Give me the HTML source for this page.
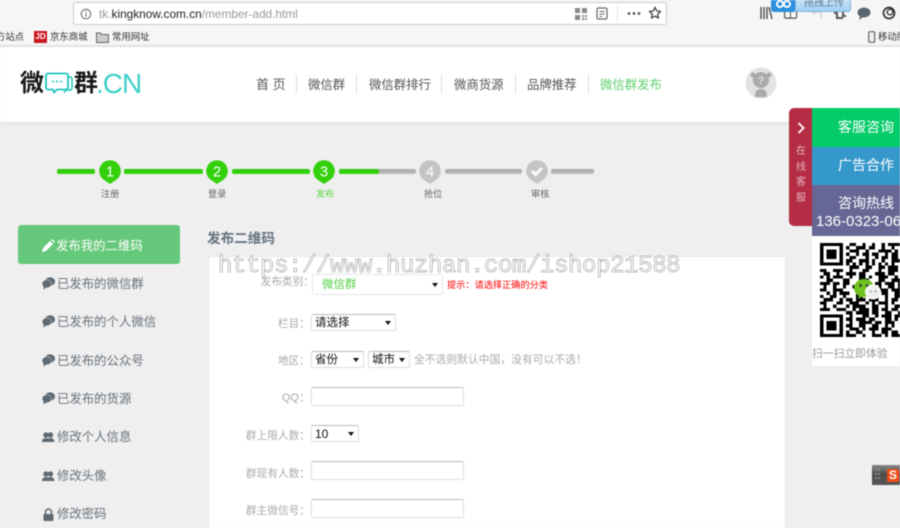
<!DOCTYPE html>
<html lang="zh"><head><meta charset="utf-8"><title>发布二维码</title>
<style>
html,body{margin:0;padding:0;width:900px;height:528px;overflow:hidden;background:#efefef}
body{position:relative;font-family:"Liberation Sans","Noto Sans CJK SC",sans-serif;color:#666}
#w{position:absolute;left:0;top:0;width:900px;height:528px;overflow:hidden;filter:blur(.4px)}
.a,.t{position:absolute}
.t{white-space:nowrap;line-height:16px;transform:translateY(-8px)}
.nav{font-size:12.4px;color:#555;margin-top:1px}
.sep{position:absolute;top:74px;width:1px;height:20px;background:#ddd}
.seg{position:absolute;top:169px;height:5px;border-radius:2px;background:linear-gradient(#2fc60a,#35d80d)}
.g{background:linear-gradient(#aaa,#bbb)}
.pin{position:absolute;top:160px}
.st{position:absolute;font-size:9.2px;color:#666;white-space:nowrap;line-height:12px;top:188px}
.m{font-size:12.4px;color:#68727c;left:57px;margin-top:1px}
.lb{font-size:10.7px;color:#aaa;text-align:right;width:100px;left:210px;margin-top:1px}
.box{position:absolute;background:#fff;border:1px solid #ddd;border-top-color:#bbb;box-sizing:border-box;border-radius:2px}
.sel{font-size:11.5px;color:#111;line-height:17px;padding-left:3px}
.sel i{position:absolute;right:4px;top:6px;width:0;height:0;border:3px solid transparent;border-top:4px solid #111;border-bottom:0}
.side{left:838px;color:#fff;font-size:14px}
</style></head><body><div id="w">
<!-- browser chrome -->
<div class="a" style="left:0;top:0;width:900px;height:47px;background:#f6f6f6;border-bottom:2px solid #e3e3e3;box-sizing:border-box"></div>
<div class="a" style="left:73px;top:2px;width:594px;height:23px;background:#fff;border:1px solid #ccc;border-radius:3px;box-sizing:border-box"></div>
<svg class="a" style="left:80px;top:8px" width="12" height="12" viewBox="0 0 12 12"><circle cx="6" cy="6" r="4.8" fill="none" stroke="#666" stroke-width="1"/><path d="M6 3v1.2M6 5.4v3.2" stroke="#666" stroke-width="1.1"/></svg>
<div class="t" style="left:99px;top:14px;font-size:11.85px;color:#999">tk.<span style="color:#222">kingknow.com.cn</span>/member-add.html</div>
<svg class="a" style="left:575px;top:8px" width="12" height="12" viewBox="0 0 12 12" fill="#8a8a8a"><path d="M0 0h5v5H0zM7 0h5v5H7zM0 7h5v5H0zM7 7h2v2H7zM10 10h2v2h-2zM10 7h2v2h-2zM7 10h2v2H7z"/></svg>
<svg class="a" style="left:596px;top:7px" width="12" height="13" viewBox="0 0 12 13"><rect x="1" y="1" width="10" height="11" rx="1.5" fill="none" stroke="#666" stroke-width="1.2"/><path d="M3.5 4.5h5M3.5 7h5M3.5 9.5h2.5" stroke="#666"/></svg>
<div class="a" style="left:617px;top:5px;width:1px;height:17px;background:#e5e5e5"></div>
<svg class="a" style="left:627px;top:11px" width="14" height="5"><circle cx="2" cy="2.5" r="1.4" fill="#555"/><circle cx="7" cy="2.5" r="1.4" fill="#555"/><circle cx="12" cy="2.5" r="1.4" fill="#555"/></svg>
<svg class="a" style="left:648px;top:6px" width="14" height="14" viewBox="0 0 14 14"><path d="M7 1.3l1.7 3.6 3.9.5-2.9 2.7.8 3.9L7 10.1 3.5 12l.8-3.9L1.4 5.4l3.900-.5z" fill="none" stroke="#444" stroke-width="1.3" stroke-linejoin="round"/></svg>
<svg class="a" style="left:760px;top:7px" width="13" height="12"><path d="M1 0v12M4 0v12M7 0v12M9 0l3 12" stroke="#555" stroke-width="1.5"/></svg>
<svg class="a" style="left:784px;top:8px" width="14" height="11"><rect x=".6" y=".6" width="12" height="9.5" rx="1.2" fill="none" stroke="#555" stroke-width="1.2"/><path d="M6.5 1v9" stroke="#555"/></svg>
<svg class="a" style="left:810px;top:8px" width="12" height="11"><path d="M2 4h6q3 0 3 3v3M2 4l3-3M2 4l3 3" fill="none" stroke="#ccc" stroke-width="1.2"/></svg>
<svg class="a" style="left:834px;top:7px" width="12" height="12"><path d="M0 6h3V3h6v6h3M3 3v8h6" fill="none" stroke="#555" stroke-width="2"/></svg>
<svg class="a" style="left:857px;top:7px" width="14" height="13"><ellipse cx="7" cy="5.5" rx="6.5" ry="5" fill="#5a6670"/><path d="M3 9l-1 4 4-3z" fill="#5a6670"/></svg>
<svg class="a" style="left:882px;top:6px" width="14" height="14"><circle cx="7" cy="7" r="5.5" fill="none" stroke="#333" stroke-width="1.7"/><circle cx="8" cy="6" r="2.8" fill="none" stroke="#333" stroke-width="1.3"/></svg>
<div class="a" style="left:771px;top:0;width:24px;height:12px;background:#2a8fdd;border-radius:0 0 0 3px"></div>
<svg class="a" style="left:775px;top:0" width="17" height="10"><circle cx="5" cy="4" r="3" fill="none" stroke="#fff" stroke-width="2"/><circle cx="12" cy="4" r="3" fill="none" stroke="#fff" stroke-width="2"/></svg>
<div class="a" style="left:795px;top:0;width:56px;height:12px;background:linear-gradient(#c5e2f7,#a3d0f0);border:1px solid #7eb6e0;border-top:0;box-sizing:border-box;border-radius:0 0 3px 3px"></div>
<div class="t" style="left:804px;top:4px;font-size:10px;color:#5a7a92">拖拽上传</div>
<div class="t" style="left:-4px;top:37px;font-size:9.4px;color:#333">方站点</div>
<div class="a" style="left:34px;top:31px;width:13px;height:12px;background:#c8161d;color:#fff;font:bold 8px/12px 'Liberation Sans',sans-serif;text-align:center">JD</div>
<div class="t" style="left:50px;top:37px;font-size:9.4px;color:#333">京东商城</div>
<svg class="a" style="left:96px;top:31px" width="13" height="12"><path d="M.5 2h4l1 1.5h7v8H.5z" fill="#ccc" stroke="#666"/></svg>
<div class="t" style="left:112px;top:37px;font-size:9.4px;color:#333">常用网址</div>
<svg class="a" style="left:868px;top:31px" width="8" height="12"><rect x=".7" y=".7" width="6" height="10.5" rx="1" fill="#eee" stroke="#666" stroke-width="1.2"/></svg>
<div class="t" style="left:878px;top:37px;font-size:9.4px;color:#333">移动版</div>
<!-- header -->
<div class="a" style="left:0;top:47px;width:900px;height:75px;background:#fff;box-shadow:0 1px 3px #ddd"></div>
<div class="t" style="left:20px;top:84px;font-size:24px;line-height:28px;transform:translateY(-14px);color:#1a1a1a;font-weight:bold">微</div>
<svg class="a" style="left:45px;top:72px" width="28" height="24" viewBox="0 0 28 24"><path d="M3 1.5h18a2 2 0 0 1 2 2v12a2 2 0 0 1-2 2h-9l-3 3-1-3H3a2 2 0 0 1-2-2v-12a2 2 0 0 1 2-2z" fill="none" stroke="#20c5bd" stroke-width="1.8"/><path d="M23 5h2a2 2 0 0 1 2 2v9a2 2 0 0 1-2 2h-4l-2 3" fill="none" stroke="#20c5bd" stroke-width="1.5"/><circle cx="8" cy="9.5" r="1" fill="#20c5bd"/><circle cx="12" cy="9.5" r="1" fill="#20c5bd"/><circle cx="16" cy="9.5" r="1" fill="#20c5bd"/></svg>
<div class="t" style="left:74px;top:84px;font-size:24px;line-height:28px;transform:translateY(-14px);color:#1a1a1a;font-weight:bold">群</div>
<div class="t" style="left:96px;top:84px;font-size:28px;line-height:30px;transform:translateY(-15px);color:#3ed0c8;letter-spacing:-1px">.CN</div>
<div class="t nav" style="left:256px;top:84px;font-size:13px">首 页</div><div class="sep" style="left:296px"></div>
<div class="t nav" style="left:308px;top:84px">微信群</div><div class="sep" style="left:356px"></div>
<div class="t nav" style="left:369px;top:84px">微信群排行</div><div class="sep" style="left:441px"></div>
<div class="t nav" style="left:454px;top:84px">微商货源</div><div class="sep" style="left:515px"></div>
<div class="t nav" style="left:527px;top:84px">品牌推荐</div><div class="sep" style="left:588px"></div>
<div class="t nav" style="left:600px;top:84px;color:#5fd070">微信群发布</div>
<svg class="a" style="left:745px;top:67px" width="32" height="32" viewBox="0 0 32 32"><circle cx="16" cy="16" r="15.5" fill="#e2e2e2"/><circle cx="16" cy="13" r="8" fill="#aaa"/><circle cx="8" cy="8" r="2.5" fill="#aaa"/><circle cx="24" cy="8" r="2.5" fill="#aaa"/><path d="M10 30c0-6 2-8 6-8s6 2 6 8z" fill="#aaa"/><text x="16" y="17" font-size="11" font-weight="bold" fill="#ddd" text-anchor="middle" font-family="Liberation Sans">?</text></svg>
<!-- steps -->
<div class="seg" style="left:57px;width:38px"></div>
<div class="seg" style="left:124px;width:79px"></div>
<div class="seg" style="left:232px;width:78px"></div>
<div class="seg g" style="left:339px;width:77px"></div>
<div class="seg" style="left:339px;width:40px"></div>
<div class="seg g" style="left:445px;width:77px"></div>
<div class="seg g" style="left:551px;width:43px"></div>
<svg class="pin" style="left:99px" width="22" height="25" viewBox="0 0 22 25"><path d="M11 24l-6-4a10.800 10.800 0 1 1 12 0z" fill="#33d00c"/><text x="11" y="16.500" font-size="14.500" fill="#fff" text-anchor="middle" font-family="Liberation Sans">1</text></svg>
<svg class="pin" style="left:206px" width="22" height="25" viewBox="0 0 22 25"><path d="M11 24l-6-4a10.800 10.800 0 1 1 12 0z" fill="#33d00c"/><text x="11" y="16.500" font-size="14.500" fill="#fff" text-anchor="middle" font-family="Liberation Sans">2</text></svg>
<svg class="pin" style="left:313px" width="22" height="25" viewBox="0 0 22 25"><path d="M11 24l-6-4a10.800 10.800 0 1 1 12 0z" fill="#33d00c"/><text x="11" y="16.500" font-size="14.500" fill="#fff" text-anchor="middle" font-family="Liberation Sans">3</text></svg>
<svg class="pin" style="left:419px" width="22" height="25" viewBox="0 0 22 25"><path d="M11 24l-6-4a10.800 10.800 0 1 1 12 0z" fill="#c4c4c4"/><text x="11" y="16.500" font-size="14.500" fill="#fff" text-anchor="middle" font-family="Liberation Sans">4</text></svg>
<svg class="pin" style="left:526px" width="22" height="25" viewBox="0 0 22 25"><path d="M11 24l-6-4a10.800 10.800 0 1 1 12 0z" fill="#c4c4c4"/><path d="M6 11l3.500 3.500L16 8" fill="none" stroke="#fff" stroke-width="2.800"/></svg>
<div class="st" style="left:101px">注册</div><div class="st" style="left:208px">登录</div>
<div class="st" style="left:316px;color:#55d83a">发布</div><div class="st" style="left:424px">抢位</div><div class="st" style="left:531px">审核</div>
<!-- sidebar -->
<div class="a" style="left:18px;top:225px;width:162px;height:39px;background:#66c87a;border-radius:3px"></div>
<svg class="a" style="left:42px;top:239px" width="13" height="13" viewBox="0 0 13 13"><path d="M0 13l1-4 7-7 3 3-7 7zM9 1l1-1 3 3-1 1z" fill="#fff"/></svg>
<div class="t" style="left:56px;top:246px;font-size:12.4px;color:#fff">发布我的二维码</div>
<svg width="0" height="0" style="position:absolute"><defs>
<g id="c"><ellipse cx="8" cy="4.500" rx="5" ry="4.300" fill="#5e6972"/><ellipse cx="4.800" cy="6.800" rx="4.700" ry="4" fill="#5e6972" stroke="#efefef" stroke-width=".5"/><path d="M1.500 9.500v3l3.500-2.500z" fill="#5e6972"/></g>
<g id="u"><circle cx="8.500" cy="3" r="2.700" fill="#5e6972"/><path d="M5 10q0-4 3.500-4T12.500 10z" fill="#5e6972"/><circle cx="4" cy="3" r="2.700" fill="#5e6972"/><path d="M0 10q0-4 4-4t3.500 4z" fill="#5e6972"/></g>
</defs></svg>
<svg class="a" style="left:42px;top:277px" width="13" height="13"><use href="#c"/></svg><div class="t m" style="top:283px">已发布的微信群</div>
<svg class="a" style="left:42px;top:315px" width="13" height="13"><use href="#c"/></svg><div class="t m" style="top:321px">已发布的个人微信</div>
<svg class="a" style="left:42px;top:354px" width="13" height="13"><use href="#c"/></svg><div class="t m" style="top:360px">已发布的公众号</div>
<svg class="a" style="left:42px;top:392px" width="13" height="13"><use href="#c"/></svg><div class="t m" style="top:398px">已发布的货源</div>
<svg class="a" style="left:42px;top:432px" width="13" height="11"><use href="#u"/></svg><div class="t m" style="top:436px">修改个人信息</div>
<svg class="a" style="left:42px;top:471px" width="13" height="11"><use href="#u"/></svg><div class="t m" style="top:475px">修改头像</div>
<svg class="a" style="left:43px;top:508px" width="11" height="13"><path d="M2.500 6V4a3 3 0 0 1 6 0v2" fill="none" stroke="#5e6972" stroke-width="1.500"/><rect x=".5" y="6" width="10" height="7" rx="1" fill="#5e6972"/></svg><div class="t m" style="top:513px">修改密码</div>
<!-- panel -->
<div class="t" style="left:207px;top:239px;font-size:13.600px;font-weight:bold;color:#65727e">发布二维码</div>
<div class="a" style="left:208px;top:256px;width:578px;height:280px;background:#fff;border:1px solid #e3e8ee;box-sizing:border-box"></div>
<div class="t lb" style="top:281px;left:214px">发布类别：</div>
<div class="box sel" style="left:312px;top:274px;width:131px;height:21px;border-color:#e4e6ea;color:#55d04a;padding-left:9px;line-height:20px">微信群<i style="top:8px"></i></div>
<div class="t" style="left:447px;top:285px;font-size:9.200px;color:#f00">提示：请选择正确的分类</div>
<div class="t lb" style="top:323px">栏目：</div>
<div class="box sel" style="left:311px;top:314px;width:85px;height:17px">请选择<i></i></div>
<div class="t lb" style="top:360px">地区：</div>
<div class="box sel" style="left:311px;top:351px;width:53px;height:17px">省份<i></i></div>
<div class="box sel" style="left:368px;top:351px;width:42px;height:17px">城市<i></i></div>
<div class="t" style="left:414px;top:360px;font-size:10.800px;color:#aaa">全不选则默认中国，没有可以不选！</div>
<div class="t lb" style="top:397px;font-size:11px">QQ：</div>
<div class="box" style="left:311px;top:387px;width:153px;height:19px"></div>
<div class="t lb" style="top:435px">群上限人数：</div>
<div class="box sel" style="left:311px;top:425px;width:48px;height:17px;font-size:12px">10<i></i></div>
<div class="t lb" style="top:473px">群现有人数：</div>
<div class="box" style="left:311px;top:461px;width:153px;height:19px"></div>
<div class="t lb" style="top:510px">群主微信号：</div>
<div class="box" style="left:311px;top:499px;width:153px;height:19px"></div>
<div class="t" style="left:218px;top:267px;font:24px/28px 'Liberation Mono',monospace;letter-spacing:-.4px;color:rgba(255,255,255,.9);-webkit-text-stroke:.7px #aaa;transform:translateY(-14px)">https://www.huzhan.com/ishop21588</div>
<!-- right float -->
<div class="a" style="left:789px;top:108px;width:24px;height:118px;background:#b52c45;border-radius:5px 0 0 5px"></div>
<svg class="a" style="left:797px;top:122px" width="9" height="12"><path d="M1.500 1l5 5-5 5" fill="none" stroke="#fff" stroke-width="1.800"/></svg>
<div class="a" style="left:795px;top:144px;width:12px;font-size:10px;line-height:15.600px;color:#e6b5c0;text-align:center">在<br>线<br>客<br>服</div>
<div class="a" style="left:812px;top:108px;width:88px;height:39px;background:#03cc68"></div>
<div class="a" style="left:812px;top:147px;width:88px;height:38px;background:#3498cb"></div>
<div class="a" style="left:812px;top:185px;width:88px;height:51px;background:#676795"></div>
<div class="a" style="left:812px;top:236px;width:88px;height:130px;background:#fff"></div>
<div class="t side" style="top:127px">客服咨询</div>
<div class="t side" style="top:165px">广告合作</div>
<div class="t side" style="top:203px">咨询热线</div>
<div class="t" style="left:816px;top:222px;font-size:15px;color:#fff;width:84px;overflow:hidden">136-0323-0600</div>
<svg class="a" style="left:820px;top:243px" width="80" height="94" viewBox="0 0 24.600 29" shape-rendering="crispEdges"><path stroke="#000" stroke-width="1" fill="none" d="
M0 .5h7m2 0h2m2 0h1m2 0h1m2 0h1m1 0h5
M0 1.500h1m5 0h1m1 0h1m2 0h3m1 0h2m2 0h1m2 0h1
M0 2.500h1m1 0h3m1 0h1m2 0h3m2 0h1m3 0h4m1 0h1
M0 3.500h1m1 0h3m1 0h1m1 0h1m2 0h1m1 0h2m1 0h2m2 0h1m1 0h2
M0 4.500h1m1 0h3m1 0h1m2 0h2m3 0h1m2 0h1m1 0h2m1 0h2
M0 5.500h1m5 0h1m1 0h2m2 0h3m1 0h1m2 0h1m2 0h3
M0 6.500h7m1 0h1m1 0h1m1 0h1m1 0h1m1 0h1m1 0h1m1 0h1m1 0h1
M9 7.500h3m2 0h2m2 0h2m1 0h3
M0 8.500h2m2 0h3m2 0h1m3 0h2m3 0h1m2 0h3
M1 9.500h2m2 0h1m2 0h3m1 0h2m3 0h3m1 0h2
M0 10.500h1m1 0h1m1 0h3m2 0h1m2 0h2m1 0h1m2 0h3m2 0h1
M2 11.500h2m3 0h2m3 0h3m3 0h2m2 0h3
M0 12.500h3m1 0h2m1 0h2m8 0h2m1 0h3m1 0h1
M1 13.500h1m2 0h1m2 0h1m2 0h1m7 0h1m2 0h2m1 0h2
M0 14.500h2m2 0h3m4 0h1m6 0h3m1 0h3
M2 15.500h1m1 0h1m1 0h3m2 0h2m4 0h1m1 0h2m2 0h2
M0 16.500h1m2 0h2m2 0h1m3 0h2m3 0h2m2 0h1m2 0h2
M1 17.500h3m2 0h1m1 0h2m1 0h3m1 0h3m2 0h1m1 0h2
M0 18.500h2m3 0h2m2 0h3m2 0h1m1 0h1m1 0h3m1 0h1
M1 19.500h1m2 0h1m3 0h1m1 0h4m2 0h2m2 0h1m2 0h2
M0 20.500h3m2 0h3m2 0h1m1 0h3m1 0h2m1 0h2m1 0h2
M8 21.500h2m1 0h4m1 0h2m2 0h2m2 0h1
M0 22.500h7m2 0h1m3 0h2m2 0h1m1 0h3m1 0h2
M0 23.500h1m5 0h1m1 0h2m1 0h3m1 0h2m3 0h2m1 0h1
M0 24.500h1m1 0h3m1 0h1m2 0h1m2 0h4m1 0h2m1 0h3
M0 25.500h1m1 0h3m1 0h1m1 0h2m2 0h2m2 0h2m2 0h1m1 0h1
M0 26.500h1m1 0h3m1 0h1m2 0h3m1 0h1m1 0h3m1 0h3
M0 27.500h1m5 0h1m1 0h1m2 0h2m3 0h1m2 0h2m1 0h2
M0 28.500h7m1 0h3m2 0h1m2 0h3m1 0h1m1 0h3"/></svg>
<svg class="a" style="left:851px;top:277px" width="32" height="26"><ellipse cx="13" cy="11" rx="10" ry="9" fill="#6fc21e"/><path d="M8 18l-1 4 5-3z" fill="#6fc21e"/><circle cx="9.500" cy="8.500" r="1.300" fill="#234"/><circle cx="16" cy="8.500" r="1.300" fill="#234"/><ellipse cx="22" cy="15" rx="7.500" ry="7" fill="#f0f0f0" stroke="#fff"/><circle cx="20" cy="14.500" r="1" fill="#999"/><circle cx="24.500" cy="14.500" r="1" fill="#999"/></svg>
<div class="t" style="left:812px;top:354px;font-size:10.800px;color:#999">扫一扫立即体验</div>
<!-- sogou -->
<div class="a" style="left:872px;top:465px;width:28px;height:20px;background:linear-gradient(#8a8a8a,#4b4d4d 45%,#555)"></div>
<svg class="a" style="left:875px;top:468px" width="8" height="14" fill="#888"><rect x="0" y="1" width="2" height="2"/><rect x="3" y="1" width="2" height="2"/><rect x="0" y="5" width="2" height="2"/><rect x="3" y="5" width="2" height="2"/><rect x="0" y="9" width="2" height="2"/><rect x="3" y="9" width="2" height="2"/></svg>
<div class="a" style="left:887px;top:469px;width:12px;height:13px;background:#f04e16;border-radius:2px;color:#fff;font:bold 12px/13px 'Liberation Sans',sans-serif;text-align:center">S</div>
</div></body></html>
